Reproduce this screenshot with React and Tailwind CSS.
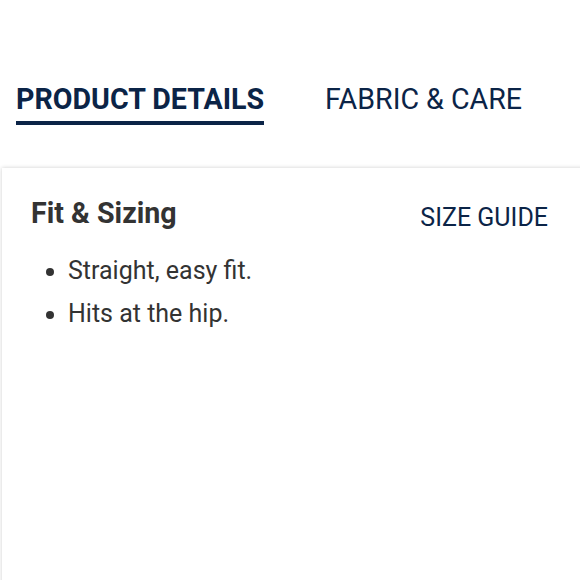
export default function App() {
  return (
    <div className="w-[580px] h-[580px] overflow-hidden bg-white font-['Roboto',sans-serif]">
      {/* Tabs */}
      <div className="flex items-start gap-[61px] pl-4 pt-[82px]">
        <div className="flex flex-col">
          <span className="text-[28.6px] leading-[34px] font-bold text-[#0b2447]">PRODUCT DETAILS</span>
          <div className="mt-[5px] h-1 bg-[#0b2447]" />
        </div>
        <span className="text-[28.6px] leading-[34px] text-[#0b2447]">FABRIC &amp; CARE</span>
      </div>

      {/* Panel */}
      <div className="mt-[43px] ml-[2px] h-[500px] w-[600px] bg-white shadow-[0_0_4px_rgba(0,0,0,0.2)] pl-[29px] pr-[54px] pt-[28px]">
        <div className="flex items-start justify-between">
          <h3 className="text-[28.6px] leading-[34px] font-bold text-[#333]">Fit &amp; Sizing</h3>
          <span className="mt-[7px] text-[25px] leading-[30px] text-[#0b2447]">SIZE GUIDE</span>
        </div>
        <ul className="mt-[16px] list-disc pl-[37px] text-[25px] leading-[43px] text-[#333]">
          <li>Straight, easy fit.</li>
          <li>Hits at the hip.</li>
        </ul>
      </div>
    </div>
  )
}
